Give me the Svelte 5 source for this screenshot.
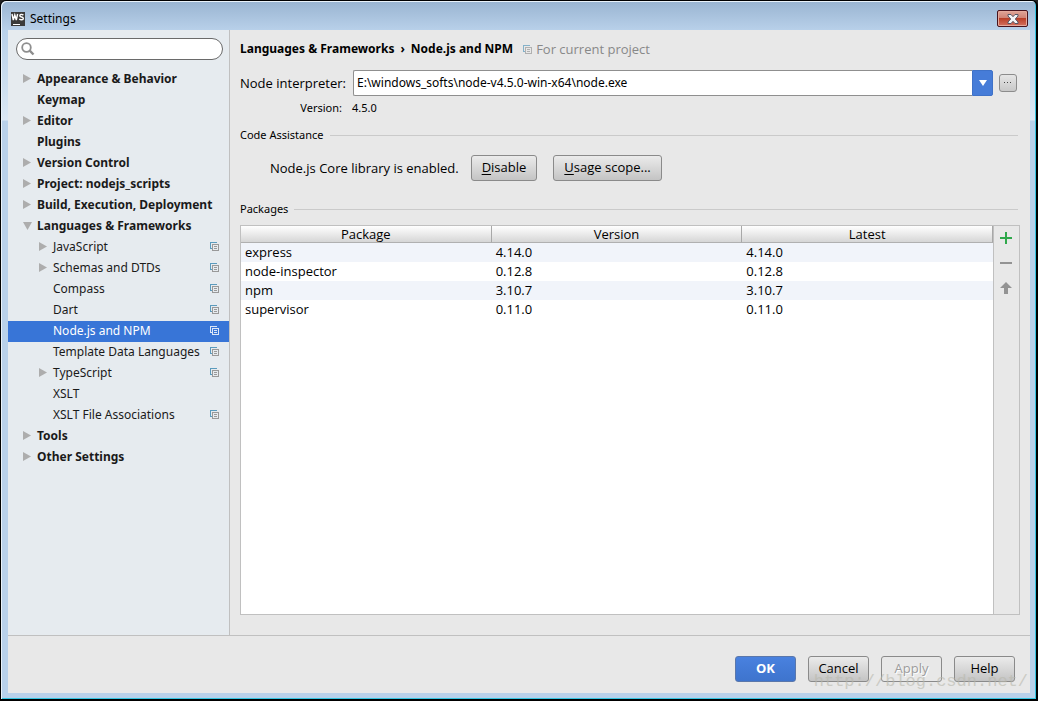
<script>
  const tree = [
    { name: 'Appearance & Behavior', arrow: 'right' },
    { name: 'Keymap' },
    { name: 'Editor', arrow: 'right' },
    { name: 'Plugins' },
    { name: 'Version Control', arrow: 'right' },
    { name: 'Project: nodejs_scripts', arrow: 'right' },
    { name: 'Build, Execution, Deployment', arrow: 'right' },
    { name: 'Languages & Frameworks', arrow: 'down' },
    { name: 'JavaScript', child: true, arrow: 'right', project: true },
    { name: 'Schemas and DTDs', child: true, arrow: 'right', project: true },
    { name: 'Compass', child: true, project: true },
    { name: 'Dart', child: true, project: true },
    { name: 'Node.js and NPM', child: true, project: true },
    { name: 'Template Data Languages', child: true, project: true },
    { name: 'TypeScript', child: true, arrow: 'right', project: true },
    { name: 'XSLT', child: true },
    { name: 'XSLT File Associations', child: true, project: true },
    { name: 'Tools', arrow: 'right' },
    { name: 'Other Settings', arrow: 'right' }
  ];
  const packages = [
    ['express', '4.14.0', '4.14.0'],
    ['node-inspector', '0.12.8', '0.12.8'],
    ['npm', '3.10.7', '3.10.7'],
    ['supervisor', '0.11.0', '0.11.0']
  ];
  let selected = $state('Node.js and NPM');
  let query = $state('');
</script>

{#snippet projectIcon(light)}
  <svg class="project" class:light width="9" height="9" viewBox="0 0 9 9" aria-hidden="true" shape-rendering="crispEdges">
    <path class="back" d="M7 1V0H0V7H2V6H1V1Z" />
    <path class="front" fill-rule="evenodd" d="M2 2H9V9H2ZM3 3V8H8V3ZM4 4H7V5H4ZM4 6H7V7H4Z" />
  </svg>
{/snippet}

<div class="window">
  <header class="titlebar">
    <svg width="14" height="14" viewBox="0 0 14 14" aria-hidden="true">
      <rect width="14" height="14" fill="#3b3b3b" />
      <path d="M1 2L2.3 8L3.8 3L5.3 8L6.6 2" fill="none" stroke="#fff" stroke-width="1.4" />
      <path d="M12.4 3.1C11 1.9 8.6 2.3 8.8 3.8C9 5.3 12.3 4.7 12.3 6.4C12.3 8.1 9.7 8.2 8.3 6.9" fill="none" stroke="#fff" stroke-width="1.4" />
      <rect x="2" y="12" width="7" height="1" fill="#fff" />
    </svg>
    <h1>Settings</h1>
    <button class="close" aria-label="Close">
      <svg width="12" height="10" viewBox="0 0 12 10" aria-hidden="true">
        <path d="M1 .5H4L6 2.7L8 .5H11V2L8.3 5L11 8V9.5H8L6 7.3L4 9.5H1V8L3.7 5L1 2Z" fill="#f4f4f6" stroke="#535666" />
      </svg>
    </button>
  </header>

  <div class="body">
    <aside>
      <label class="search">
        <svg width="14" height="14" viewBox="0 0 14 14" aria-hidden="true">
          <circle cx="5.5" cy="5.5" r="4.3" fill="none" stroke="#8e8e8e" stroke-width="1.8" />
          <path d="M8.7 8.7L12.5 12.5" stroke="#8e8e8e" stroke-width="2.4" />
        </svg>
        <input type="text" aria-label="Search settings" bind:value={query} />
      </label>
      <nav>
        {#each tree as item}
          <button class="node" class:child={item.child} class:selected={item.name === selected} onclick={() => (selected = item.name)}>
            <span class="arrow">
              {#if item.arrow === 'right'}
                <svg width="8" height="9" viewBox="0 0 8 9" aria-hidden="true"><path d="M0 0L8 4.5L0 9Z" /></svg>
              {:else if item.arrow === 'down'}
                <svg width="9" height="8" viewBox="0 0 9 8" aria-hidden="true"><path d="M0 0H9L4.5 8Z" /></svg>
              {/if}
            </span>
            <span class="name">{item.name}</span>
            {#if item.project}{@render projectIcon(item.name === selected)}{/if}
          </button>
        {/each}
      </nav>
    </aside>

    <main>
      <div class="crumbs">
        <h2><span>Languages &amp; Frameworks</span><span>›</span><span>Node.js and NPM</span></h2>
        <span class="scope">{@render projectIcon(false)}For current project</span>
      </div>

      <div class="form">
        <label for="interpreter">Node interpreter:</label>
        <div class="field">
          <div class="combo">
            <input id="interpreter" type="text" value={'E:\\windows_softs\\node-v4.5.0-win-x64\\node.exe'} />
            <button class="drop" aria-label="Show interpreters">
              <svg width="8" height="6" viewBox="0 0 8 6" aria-hidden="true"><path d="M0 0H8L4 6Z" fill="#fff" /></svg>
            </button>
          </div>
          <button class="browse" aria-label="Browse">
            <svg width="8" height="2" viewBox="0 0 8 2" aria-hidden="true" shape-rendering="crispEdges"><path d="M0 0H1V1H0ZM3 0H4V1H3ZM6 0H7V1H6Z" fill="#444" /></svg>
          </button>
        </div>
        <span class="small right">Version:</span>
        <span class="small">4.5.0</span>
      </div>

      <h3>Code Assistance</h3>
      <div class="assist">
        <span>Node.js Core library is enabled.</span>
        <div class="actions">
          <button class="btn"><u>D</u>isable</button>
          <button class="btn"><u>U</u>sage scope...</button>
        </div>
      </div>

      <h3>Packages</h3>
      <div class="packages">
        <div class="scroll">
          <table>
            <thead>
              <tr><th>Package</th><th>Version</th><th>Latest</th></tr>
            </thead>
            <tbody>
              {#each packages as row}
                <tr>{#each row as cell}<td>{cell}</td>{/each}</tr>
              {/each}
            </tbody>
          </table>
        </div>
        <div class="tools">
          <button aria-label="Install">
            <svg width="12" height="12" viewBox="0 0 12 12" aria-hidden="true"><path d="M5 0H7V5H12V7H7V12H5V7H0V5H5Z" fill="#2fa84b" /></svg>
          </button>
          <button aria-label="Uninstall">
            <svg width="12" height="12" viewBox="0 0 12 12" aria-hidden="true"><path d="M0 5H12V7H0Z" fill="#939393" /></svg>
          </button>
          <button aria-label="Upgrade">
            <svg width="12" height="12" viewBox="0 0 12 12" aria-hidden="true"><path d="M6 0L12 6H8V12H4V6H0Z" fill="#939393" /></svg>
          </button>
        </div>
      </div>
    </main>
  </div>

  <footer>
    <button class="btn primary">OK</button>
    <button class="btn">Cancel</button>
    <button class="btn" disabled>Apply</button>
    <button class="btn">Help</button>
    <span class="watermark">http://blog.csdn.net/</span>
  </footer>
</div>

<style>
  .window, .window * { box-sizing: border-box; }
  .window {
    display: flex;
    flex-direction: column;
    min-height: 100vh;
    padding: 0 6px 6px;
    border: 1px solid #000;
    border-bottom-width: 2px;
    border-right-width: 2px;
    border-radius: 6px 6px 0 0;
    background: linear-gradient(#99b4d1, #b9d1ea 30px, #cfe0f0 90px, #dce8f4 119px, #b9d1ea 120px);
    box-shadow: inset 1px 1px #e9f2fa, inset -1px -1px #35c5e2;
    color: #000;
    font: 13px/20px "Open Sans", "Noto Sans", sans-serif;
  }
  :global(body) { background: #222; }
  button, input { font: inherit; color: inherit; }
  h1, h2, h3 { margin: 0; font-weight: 400; }
  h1, h2, .node, .combo input { font-family: "Noto Sans", sans-serif; font-size: 12px; }

  .titlebar {
    display: flex;
    align-items: center;
    gap: 5px;
    height: 29px;
    padding: 6px 2px 0 4px;
  }
  h1 { flex: 1; }
  .close {
    display: grid;
    place-items: center;
    width: 31px;
    height: 17px;
    padding: 0;
    border: 1px solid #47131d;
    border-radius: 2px;
    background: linear-gradient(#dfa598, #cf8173 48%, #b93f28 50%, #d4715f);
    box-shadow: inset 0 0 0 1px #e4a99c;
  }

  .body {
    flex: 1;
    display: flex;
    margin: 0 0 0 1px;
    background: #e8e8e8;
  }
  aside {
    flex: none;
    width: 222px;
    padding: 8px 0;
    background: #e6ebef;
    border-right: 1px solid #c0c0c0;
  }
  .search {
    display: flex;
    align-items: center;
    gap: 4px;
    height: 22px;
    margin: 0 6px 9px 8px;
    padding: 0 8px 0 4px;
    border: 1px solid #6a6a6a;
    border-radius: 11px;
    background: #fff;
  }
  .search input { flex: 1; min-width: 0; border: 0; padding: 0; background: none; outline: none; }

  .node {
    display: flex;
    align-items: center;
    width: 100%;
    height: 21px;
    padding: 0 10px 2px 15px;
    border: 0;
    background: none;
    color: #1a1a1a;
    text-align: left;
    white-space: nowrap;
    font-weight: 700;
  }
  .child { padding-left: 31px; font-weight: 400; }
  .selected { background: #3875d7; color: #fff; }
  .arrow { flex: none; display: flex; width: 14px; }
  .arrow svg { fill: #adadad; }
  .name { flex: 1; }
  .project { flex: none; }
  .back { fill: #5b9bbd; }
  .front { fill: #999; }
  .light .back, .light .front { fill: #dbe6f7; }

  main {
    flex: 1;
    min-width: 0;
    display: flex;
    flex-direction: column;
    padding: 9px 10px 20px;
  }
  .crumbs { display: flex; gap: 10px; }
  h2 { display: flex; gap: 6px; font-weight: 700; }
  .scope { display: flex; align-items: center; gap: 4px; color: #888; }
  .scope svg { opacity: .7; }

  .form {
    display: grid;
    grid-template-columns: 102px 1fr;
    align-items: center;
    gap: 2px 10px;
    margin: 11px 3px 8px 0;
    white-space: nowrap;
  }
  .field { display: flex; align-items: center; gap: 6px; padding-left: 1px; }
  .combo { flex: 1; min-width: 0; display: flex; height: 26px; }
  .combo input {
    flex: 1;
    min-width: 0;
    padding: 0 3px;
    border: 1px solid #8f8f8f;
    border-right: 0;
    border-radius: 2px 0 0 2px;
    background: #fff;
    outline: none;
  }
  .drop {
    display: grid;
    place-items: center;
    width: 21px;
    padding: 0;
    border: 1px solid #3f72c8;
    border-radius: 0 2px 2px 0;
    background: #467cd8;
  }
  .browse {
    display: grid;
    place-items: center;
    width: 18px;
    height: 18px;
    padding: 0;
    border: 1px solid #8c8c8c;
    border-radius: 3px;
    background: linear-gradient(#e6e6e6, #c8c8c8);
  }
  .small, h3 { font-family: "Noto Sans", sans-serif; font-size: 11px; }
  .right { text-align: right; }

  h3 {
    display: flex;
    align-items: center;
    gap: 6px;
    line-height: 18px;
  }
  h3::after { content: ""; flex: 1; height: 1px; margin-right: 2px; background: #cacaca; }

  .assist { display: flex; align-items: center; gap: 12px; padding: 11px 0 19px 30px; }
  .actions { display: flex; gap: 16px; }
  .btn {
    height: 26px;
    padding: 0 10px 2px;
    border: 1px solid #8a8a8a;
    border-radius: 3px;
    background: linear-gradient(#ebebeb, #c4c4c4);
  }
  u { text-underline-offset: 2px; }

  .packages { flex: 1; display: flex; margin-top: 7px; border: 1px solid #c0c0c0; }
  .scroll { flex: 1; min-width: 0; background: #fff; }
  table { width: 100%; border-collapse: separate; border-spacing: 0; table-layout: fixed; }
  th {
    height: 17px;
    padding: 0;
    border-right: 1px solid #a8a8a8;
    border-bottom: 1px solid #b0b0b0;
    background: linear-gradient(#fff, #d6d6d6);
    font-weight: 400;
    line-height: 16px;
  }
  td { height: 19px; padding: 0 4px; line-height: 19px; }
  tbody tr:nth-child(odd) { background: #f1f4fa; }
  .tools {
    flex: none;
    width: 26px;
    display: flex;
    flex-direction: column;
    border-left: 1px solid #c0c0c0;
  }
  .tools button { display: grid; place-items: center; height: 25px; padding: 0 2px 2px 0; border: 0; background: none; }

  footer {
    position: relative;
    display: flex;
    justify-content: flex-end;
    gap: 12px;
    margin-left: 1px;
    padding: 20px 15px 11px;
    border-top: 1px solid #c0c0c0;
    background: #e8e8e8;
  }
  footer .btn { width: 61px; padding: 0 0 2px; }
  .primary { background: linear-gradient(#4981df, #3e74cd); border-color: #5a77ab; color: #fff; font-weight: 700; }
  .btn:disabled { background: #e8e8e8; color: #9c9c9c; text-shadow: 1px 1px #fff; }
  .watermark {
    position: absolute;
    right: 2px;
    bottom: 1px;
    color: #b9b9ae;
    font: 17px/20px "Liberation Mono", monospace;
    opacity: .6;
    pointer-events: none;
  }
</style>
